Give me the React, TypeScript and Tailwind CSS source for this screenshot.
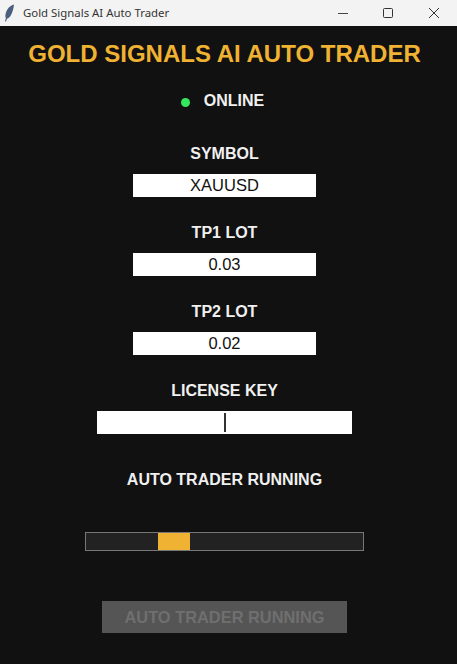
export default function App() {
  const sans = "font-['Liberation_Sans',Arial,sans-serif]";
  const label = `${sans} font-bold text-[16px] leading-[20px] text-[#f0f0f0] text-center`;
  const field = `${sans} bg-white text-[#111] text-[16.5px] leading-[23px] h-[23px] text-center`;
  return (
    <div className={`w-[457px] h-[664px] bg-[#111111] flex flex-col overflow-hidden ${sans}`}>
      <div className="w-full h-[26px] bg-[#f3f3f3] flex items-center shrink-0">
        <svg width="12" height="18" viewBox="0 0 12 18" className="ml-[3px]">
          <path d="M11 0.500C7 1.500 3.500 5 2.500 10.500c-.3 1.500-.1 2.800.4 3.500L2 17.500h1l1-2.800C7.500 14 10 8.500 11 .5z" fill="#4a5f7d" />
        </svg>
        <span className="ml-[8px] text-[11.4px] text-[#333] font-['Noto_Sans',sans-serif]">Gold Signals AI Auto Trader</span>
        <div className="ml-auto flex items-center">
          <svg width="12" height="12" viewBox="0 0 12 12" className="mr-[33px]"><path d="M1 6.500H11" stroke="#444" strokeWidth="1" /></svg>
          <svg width="12" height="12" viewBox="0 0 12 12" className="mr-[34px]"><rect x="1.500" y="1.500" width="9" height="9" rx="1" fill="none" stroke="#333" strokeWidth="1" /></svg>
          <svg width="12" height="12" viewBox="0 0 12 12" className="mr-[17px]"><path d="M1 1L11 11M11 1L1 11" stroke="#333" strokeWidth="1" /></svg>
        </div>
      </div>
      <div className="flex flex-col items-center pr-[8px]">
        <div className="mt-[14px] h-[28px] font-bold text-[24px] leading-[28px] text-[#f0b232] text-center whitespace-nowrap">GOLD SIGNALS AI AUTO TRADER</div>
        <div className="mt-[23px] h-[20px] flex items-center mr-[4px]">
          <div className="w-[9px] h-[9px] rounded-full bg-[#33e85c] mt-[3px]" />
          <span className="ml-[14px] font-bold text-[16px] leading-[20px] text-[#f0f0f0]">ONLINE</span>
        </div>
        <div className={`mt-[33px] ${label}`}>SYMBOL</div>
        <div className={`mt-[10px] w-[183px] ${field}`}>XAUUSD</div>
        <div className={`mt-[26px] ${label}`}>TP1 LOT</div>
        <div className={`mt-[10px] w-[183px] ${field}`}>0.03</div>
        <div className={`mt-[26px] ${label}`}>TP2 LOT</div>
        <div className={`mt-[10px] w-[183px] ${field}`}>0.02</div>
        <div className={`mt-[26px] ${label}`}>LICENSE KEY</div>
        <div className={`mt-[10px] w-[255px] ${field} flex items-center justify-center`}>
          <div className="w-[2px] h-[19px] bg-[#333]" />
        </div>
        <div className={`mt-[36px] ${label}`}>AUTO TRADER RUNNING</div>
        <div className="mt-[42px] w-[279px] h-[19px] bg-[#222222] border border-[#777777] pl-[72px] shrink-0">
          <div className="w-[32px] h-[17px] bg-[#f0b232]" />
        </div>
        <div className="mt-[50px] w-[245px] h-[32px] bg-[#555555] text-[#6f6f6f] font-bold text-[16.4px] leading-[32px] text-center">AUTO TRADER RUNNING</div>
      </div>
    </div>
  );
}
